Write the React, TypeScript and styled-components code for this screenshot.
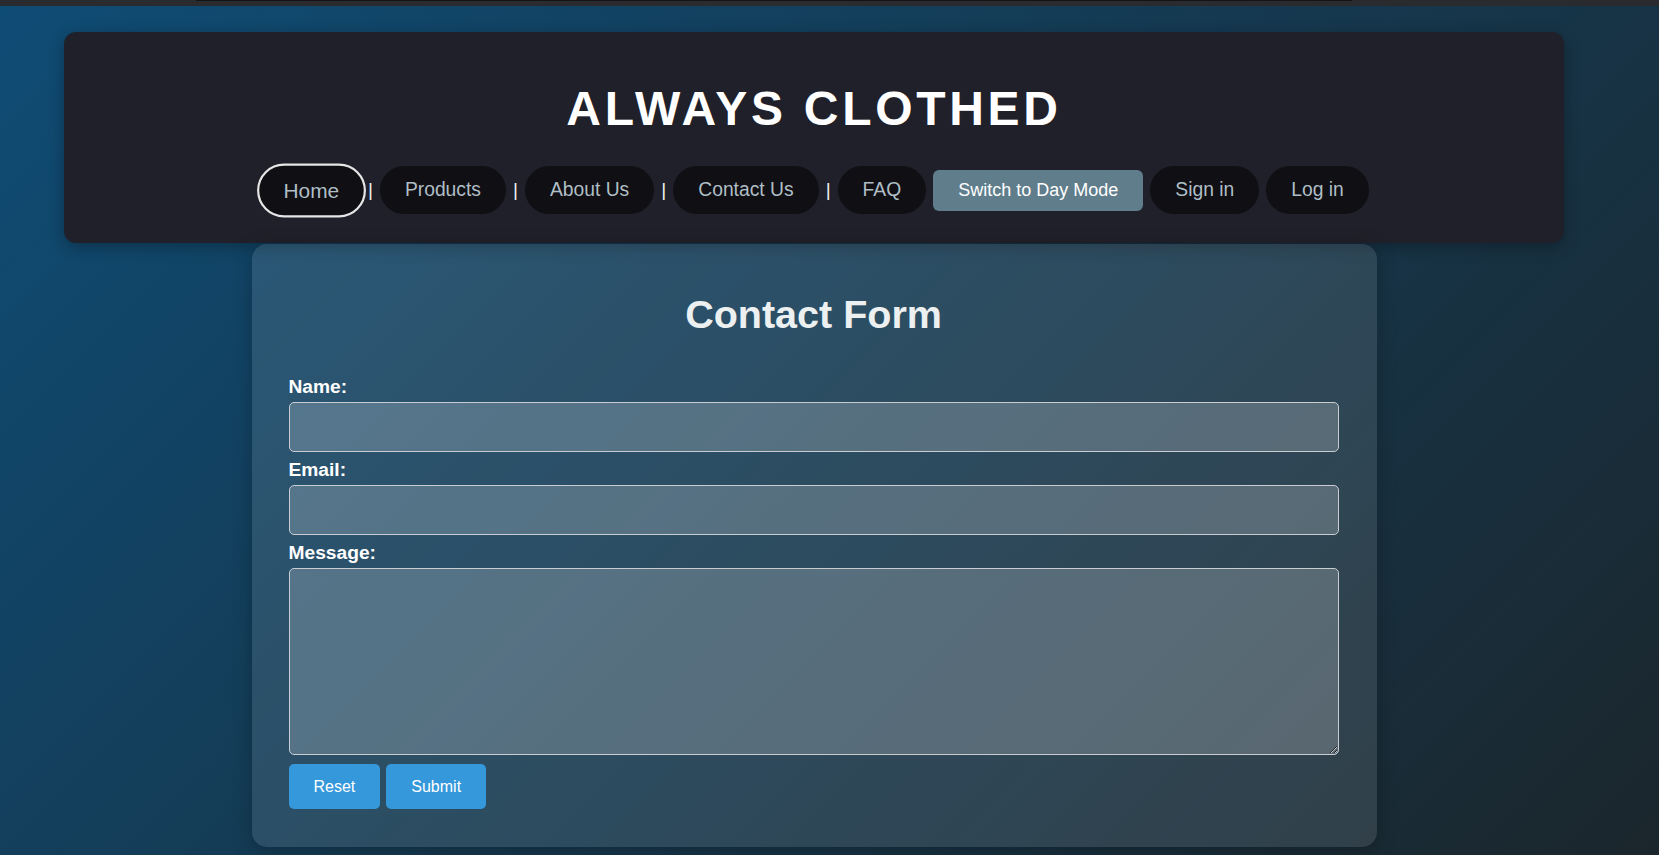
import React from "react";
import styled, { createGlobalStyle } from "styled-components";

const GlobalStyle = createGlobalStyle`
  html, body { margin: 0; padding: 0; }
  body {
    font-family: "Liberation Sans", Arial, sans-serif;
    background: #1b262c;
  }
  * { box-sizing: border-box; }
`;

const TopStrip = styled.div`
  height: 6px;
  background: #2a2b2f;
  padding: 0 307px 0 196px;
`;

const TopLine = styled.div`
  height: 1px;
  background: #141417;
`;

const Page = styled.div`
  min-height: calc(100vh - 6px);
  background: linear-gradient(135deg, #0f4c75 0%, #1b262c 100%);
  padding: 26px 95px 8px 64px;
`;

const Header = styled.header`
  background: #1f2029;
  border-radius: 12px;
  padding: 50px 0 29px;
  display: flex;
  flex-direction: column;
  align-items: center;
  gap: 31px;
  box-shadow: 0 4px 16px rgba(0, 0, 0, 0.3);
`;

const Title = styled.h1`
  margin: 0;
  font-size: 48px;
  line-height: 53px;
  letter-spacing: 3.7px;
  font-weight: bold;
  color: #ffffff;
`;

const Nav = styled.nav`
  display: flex;
  align-items: center;
  gap: 7px;
  height: 48px;
  padding-left: 3px;
`;

const NavLink = styled.a<{ $active?: boolean }>`
  display: block;
  font-size: ${(p) => (p.$active ? "19px" : "19.3px")};
  line-height: ${(p) => (p.$active ? "21px" : "24px")};
  padding: ${(p) => (p.$active ? "12px 22px" : "12px 25px")};
  color: #b0bec5;
  background: #0f0f14;
  border-radius: 30px;
  text-decoration: none;
  white-space: nowrap;
  border: ${(p) => (p.$active ? "2px solid #e6e6e6" : "none")};
  transform: ${(p) => (p.$active ? "scale(1.1)" : "none")};
`;

const Separator = styled.span`
  font-size: 19.2px;
  color: #f0f0f0;
  line-height: 24px;
`;

const ModeButton = styled.button`
  font-family: "Liberation Sans", Arial, sans-serif;
  font-size: 18px;
  line-height: 21px;
  padding: 10px 25px;
  background: #607d8b;
  color: #ffffff;
  border: none;
  border-radius: 6px;
  white-space: nowrap;
`;

const Card = styled.main`
  width: 75%;
  margin: 1px auto 0;
  background: rgba(255, 255, 255, 0.1);
  border-radius: 15px;
  padding: 48px 38px 38px 37px;
  box-shadow: 0 4px 20px rgba(0, 0, 0, 0.25);
`;

const FormTitle = styled.h2`
  margin: 0 0 39px;
  font-size: 39.5px;
  line-height: 45px;
  font-weight: bold;
  text-align: center;
  color: #ecf0f1;
`;

const Form = styled.form`
  display: flex;
  flex-direction: column;
`;

const Label = styled.label`
  display: block;
  font-size: 19.2px;
  line-height: 22px;
  font-weight: bold;
  color: #ffffff;
  margin-bottom: 4px;
`;

const Input = styled.input`
  display: block;
  width: 100%;
  height: 50px;
  margin: 0 0 7px;
  background: rgba(255, 255, 255, 0.2);
  border: 1px solid #c9cdd1;
  border-radius: 5px;
  color: #fff;
  font-family: "Liberation Sans", Arial, sans-serif;
  font-size: 16px;
  padding: 0 10px;
`;

const TextArea = styled.textarea`
  display: block;
  width: 100%;
  height: 187px;
  margin: 0 0 9px;
  background: rgba(255, 255, 255, 0.2);
  border: 1px solid #c9cdd1;
  border-radius: 5px;
  color: #fff;
  font-family: "Liberation Sans", Arial, sans-serif;
  font-size: 16px;
  padding: 10px;
`;

const ButtonRow = styled.div`
  display: flex;
  gap: 6px;
`;

const ActionButton = styled.button`
  height: 45px;
  padding: 0 25px;
  font-family: "Liberation Sans", Arial, sans-serif;
  font-size: 16px;
  background: #3498db;
  color: #ffffff;
  border: none;
  border-radius: 5px;
`;

export default function App() {
  return (
    <>
      <GlobalStyle />
      <TopStrip>
        <TopLine />
      </TopStrip>
      <Page>
        <Header>
          <Title>ALWAYS CLOTHED</Title>
          <Nav>
            <NavLink $active href="#">Home</NavLink>
            <Separator>|</Separator>
            <NavLink href="#">Products</NavLink>
            <Separator>|</Separator>
            <NavLink href="#">About Us</NavLink>
            <Separator>|</Separator>
            <NavLink href="#">Contact Us</NavLink>
            <Separator>|</Separator>
            <NavLink href="#">FAQ</NavLink>
            <ModeButton type="button">Switch to Day Mode</ModeButton>
            <NavLink href="#">Sign in</NavLink>
            <NavLink href="#">Log in</NavLink>
          </Nav>
        </Header>
        <Card>
          <FormTitle>Contact Form</FormTitle>
          <Form onSubmit={(e) => e.preventDefault()}>
            <Label htmlFor="name">Name:</Label>
            <Input id="name" type="text" />
            <Label htmlFor="email">Email:</Label>
            <Input id="email" type="email" />
            <Label htmlFor="message">Message:</Label>
            <TextArea id="message" />
            <ButtonRow>
              <ActionButton type="reset">Reset</ActionButton>
              <ActionButton type="submit">Submit</ActionButton>
            </ButtonRow>
          </Form>
        </Card>
      </Page>
    </>
  );
}
